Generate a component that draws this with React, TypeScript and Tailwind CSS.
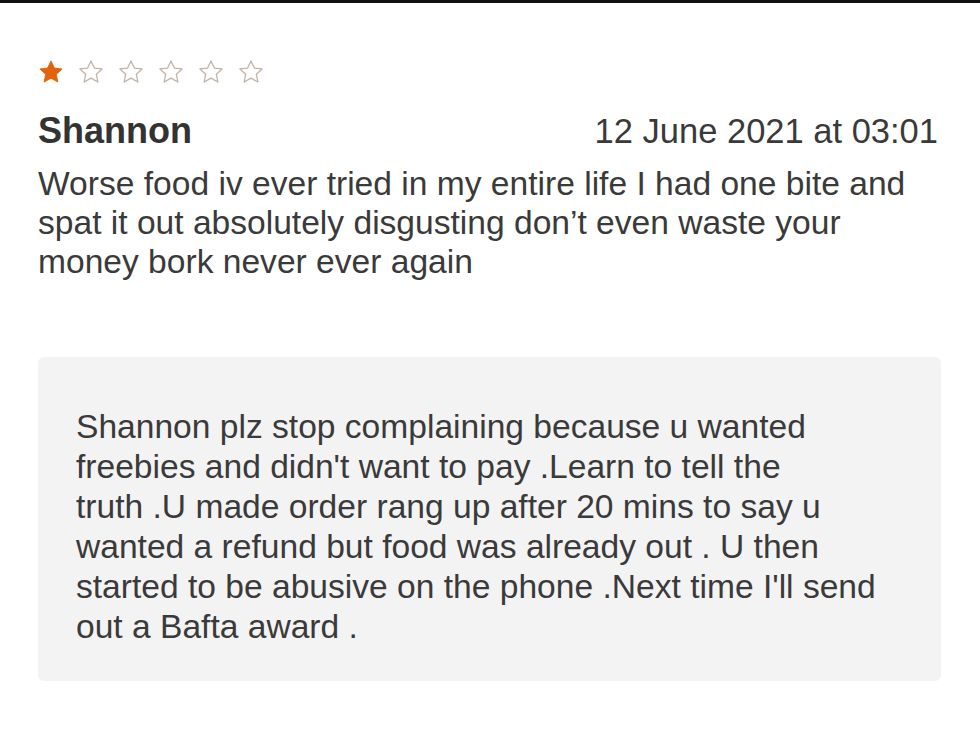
const Star = ({ filled }: { filled?: boolean }) => (
  <svg width="28" height="28" viewBox="0 0 24 24" className="shrink-0">
    <path
      d="M12 2.5l2.9 6.1 6.6.8-4.9 4.6 1.3 6.6L12 17.3l-5.9 3.3 1.3-6.6-4.9-4.6 6.6-.8z"
      fill={filled ? '#e2630b' : 'none'}
      stroke={filled ? '#e2630b' : '#bfb3a3'}
      strokeWidth={filled ? 0.8 : 1.1}
      strokeLinejoin="round"
    />
  </svg>
)

const review = [
  'Worse food iv ever tried in my entire life I had one bite and',
  'spat it out absolutely disgusting don’t even waste your',
  'money bork never ever again',
]

const reply = [
  'Shannon plz stop complaining because u wanted',
  "freebies and didn't want to pay .Learn to tell the",
  'truth .U made order rang up after 20 mins to say u',
  'wanted a refund but food was already out . U then',
  "started to be abusive on the phone .Next time I'll send",
  'out a Bafta award .',
]

const App = () => {
  return (
    <div
      className="w-[980px] h-[734px] bg-white border-t-[3px] border-[#111] overflow-hidden text-[#3a3a3a]"
      style={{ fontFamily: '"Liberation Sans", Arial, sans-serif' }}
    >
      <div className="px-[38px] pt-[55px]">
        <div className="flex gap-[12px] -ml-[1px]">
          <Star filled />
          <Star />
          <Star />
          <Star />
          <Star />
          <Star />
        </div>
        <div className="flex items-baseline justify-between mt-[25px] pr-[4px] leading-[40px]">
          <div className="text-[36px] font-bold text-[#333]">Shannon</div>
          <div className="text-[34.5px]">12 June 2021 at 03:01</div>
        </div>
        <div className="text-[33.6px] leading-[39px] mt-[13px] whitespace-nowrap">
          {review.map((line) => (
            <div key={line}>{line}</div>
          ))}
        </div>
        <div className="mt-[76px] mr-[1px] bg-[#f3f3f3] rounded-[6px] h-[324px] pl-[38px] pr-[40px] pt-[50px]">
          <div className="text-[33.6px] leading-[40px] whitespace-nowrap">
            {reply.map((line) => (
              <div key={line}>{line}</div>
            ))}
          </div>
        </div>
      </div>
    </div>
  )
}

export default App
